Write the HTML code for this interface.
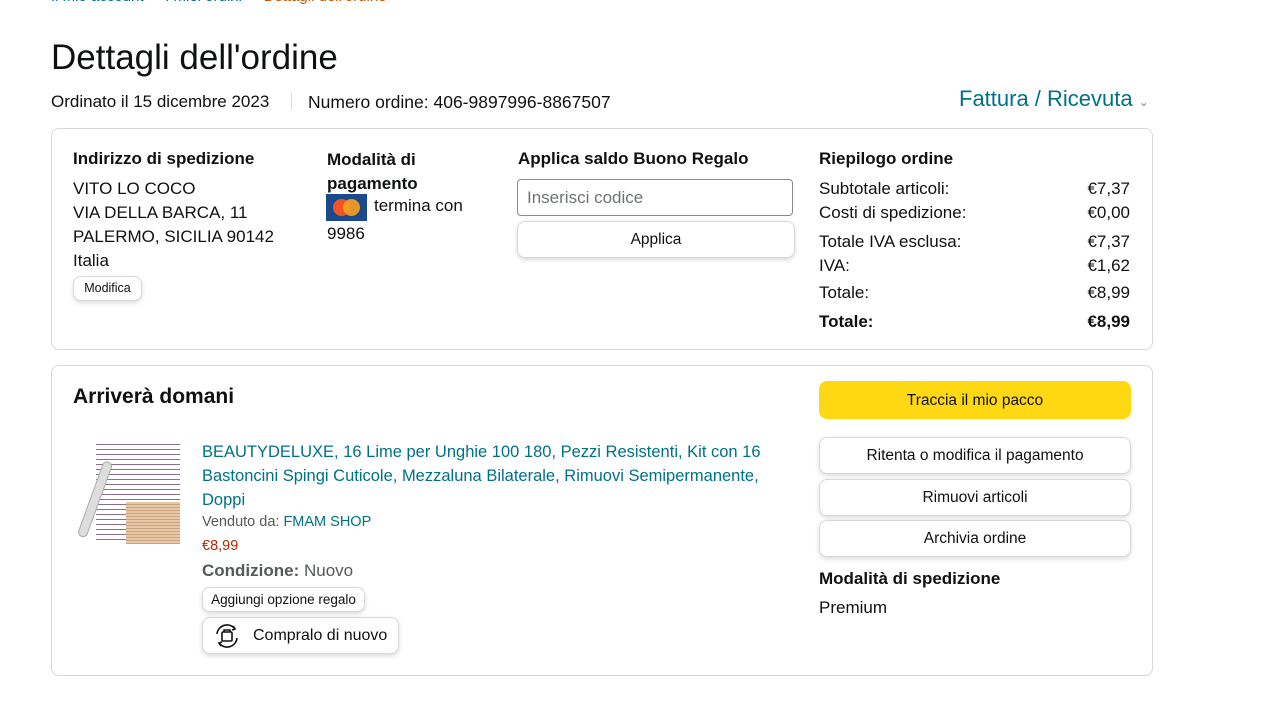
<!DOCTYPE html>
<html><head><meta charset="utf-8"><style>
*{margin:0;padding:0;box-sizing:border-box}
body{width:1280px;height:703px;background:#fff;font-family:"Liberation Sans",Arial,sans-serif;color:#0f1111;position:relative;overflow:hidden;font-size:17px}
.a{position:absolute;white-space:nowrap}
.b{font-weight:bold}
.box{position:absolute;border:1px solid #d5d9d9;border-radius:8px}
.btn{position:absolute;border:1px solid #d5d9d9;border-radius:8px;background:#fff;text-align:center;font-size:15.5px;box-shadow:0 2px 5px rgba(15,17,17,.15)}
.teal{color:#007185}
.r{text-align:right;width:80px}
</style></head><body>
<div class="a teal" style="left:51px;top:-12px;font-size:15px">Il mio account &nbsp;›&nbsp; I miei ordini &nbsp;›&nbsp; <span style="color:#c45500">Dettagli dell'ordine</span></div>
<div class="a" style="left:51px;top:38px;font-size:35px">Dettagli dell'ordine</div>
<div class="a" style="left:51px;top:92px">Ordinato il 15 dicembre 2023</div>
<div class="a" style="left:291px;top:92px;width:1px;height:18px;background:#ddd"></div>
<div class="a" style="left:308px;top:92px;font-size:17.5px">Numero ordine: 406-9897996-8867507</div>
<div class="a teal" style="left:959px;top:86px;font-size:22px">Fattura / Ricevuta <span style="font-size:12px;color:#888">⌄</span></div>

<div class="box" style="left:51px;top:128px;width:1102px;height:222px"></div>
<div class="a b" style="left:73px;top:149px">Indirizzo di spedizione</div>
<div class="a" style="left:73px;top:177px;line-height:24px">VITO LO COCO<br>VIA DELLA BARCA, 11<br>PALERMO, SICILIA 90142<br>Italia</div>
<div class="btn" style="left:73px;top:276px;width:69px;height:25px;font-size:12.5px;line-height:23px">Modifica</div>
<div class="a b" style="left:327px;top:148px;line-height:24px">Modalità di<br>pagamento</div>
<div class="a" style="left:326px;top:194px;width:41px;height:27px;background:#1a4a8a"><div style="position:absolute;left:7px;top:5px;width:17px;height:17px;border-radius:50%;background:#e52"></div><div style="position:absolute;left:17px;top:5px;width:17px;height:17px;border-radius:50%;background:#f9a020;opacity:.9"></div></div>
<div class="a" style="left:374px;top:196px">termina con</div>
<div class="a" style="left:327px;top:224px">9986</div>
<div class="a b" style="left:518px;top:149px">Applica saldo Buono Regalo</div>
<div class="a" style="left:517px;top:179px;width:276px;height:37px;border:1px solid #888c8c;border-radius:4px;padding:8px 9px;color:#6f7373">Inserisci codice</div>
<div class="btn" style="left:517px;top:221px;width:278px;height:37px;line-height:36px">Applica</div>
<div class="a b" style="left:819px;top:149px">Riepilogo ordine</div>
<div class="a" style="left:819px;top:177px;line-height:24px">Subtotale articoli:<br>Costi di spedizione:</div>
<div class="a r" style="left:1050px;top:177px;line-height:24px">€7,37<br>€0,00</div>
<div class="a" style="left:819px;top:230px;line-height:24px">Totale IVA esclusa:<br>IVA:</div>
<div class="a r" style="left:1050px;top:230px;line-height:24px">€7,37<br>€1,62</div>
<div class="a" style="left:819px;top:283px">Totale:</div>
<div class="a r" style="left:1050px;top:283px">€8,99</div>
<div class="a b" style="left:819px;top:312px">Totale:</div>
<div class="a r b" style="left:1050px;top:312px">€8,99</div>

<div class="box" style="left:51px;top:365px;width:1102px;height:311px"></div>
<div class="a b" style="left:73px;top:385px;font-size:21px">Arriverà domani</div>
<div class="a" style="left:96px;top:440px;width:84px;height:104px;background:repeating-linear-gradient(#fff 0 4px,#8a6e8a 4px 5px)"></div>
<div class="a" style="left:126px;top:502px;width:54px;height:42px;background:repeating-linear-gradient(#e8c8a8 0 2px,#c9a37e 2px 3px)"></div>
<div class="a" style="top:460px;width:10px;height:80px;background:#ddd;border:1px solid #aaa;border-radius:5px;transform:rotate(20deg);transform-origin:top left;left:104px"></div>
<div class="a teal" style="left:202px;top:440px;line-height:24px;font-size:16.5px">BEAUTYDELUXE, 16 Lime per Unghie 100 180, Pezzi Resistenti, Kit con 16<br>Bastoncini Spingi Cuticole, Mezzaluna Bilaterale, Rimuovi Semipermanente,<br>Doppi</div>
<div class="a" style="left:202px;top:514px;font-size:14.5px;color:#565959">Venduto da: <span class="teal">FMAM SHOP</span></div>
<div class="a" style="left:202px;top:538px;font-size:14.5px;color:#b12704">€8,99</div>
<div class="a" style="left:202px;top:561px;color:#565959"><b>Condizione:</b> Nuovo</div>
<div class="btn" style="left:202px;top:587px;width:163px;height:25px;font-size:13.5px;line-height:23px">Aggiungi opzione regalo</div>
<div class="btn" style="left:202px;top:617px;width:197px;height:37px;line-height:36px;text-align:left;padding-left:50px;font-size:16px">Compralo di nuovo</div>
<svg class="a" style="left:212px;top:622px" width="30" height="28" viewBox="0 0 30 28" fill="none" stroke="#111" stroke-width="1.6"><path d="M5 12a10 10 0 0 1 18-5"/><path d="M25 16a10 10 0 0 1-18 5"/><path d="M21 4l2 3-3 1M9 24l-2-3 3-1"/><rect x="10" y="10" width="10" height="9" rx="1"/><path d="M12 10V8h6v2"/></svg>
<div class="a" style="left:819px;top:381px;width:312px;height:38px;background:#ffd814;border-radius:8px;text-align:center;line-height:39px;font-size:15.5px">Traccia il mio pacco</div>
<div class="btn" style="left:819px;top:437px;width:312px;height:37px;line-height:36px">Ritenta o modifica il pagamento</div>
<div class="btn" style="left:819px;top:479px;width:312px;height:37px;line-height:36px">Rimuovi articoli</div>
<div class="btn" style="left:819px;top:520px;width:312px;height:37px;line-height:36px">Archivia ordine</div>
<div class="a b" style="left:819px;top:569px">Modalità di spedizione</div>
<div class="a" style="left:819px;top:598px">Premium</div>
</body></html>
